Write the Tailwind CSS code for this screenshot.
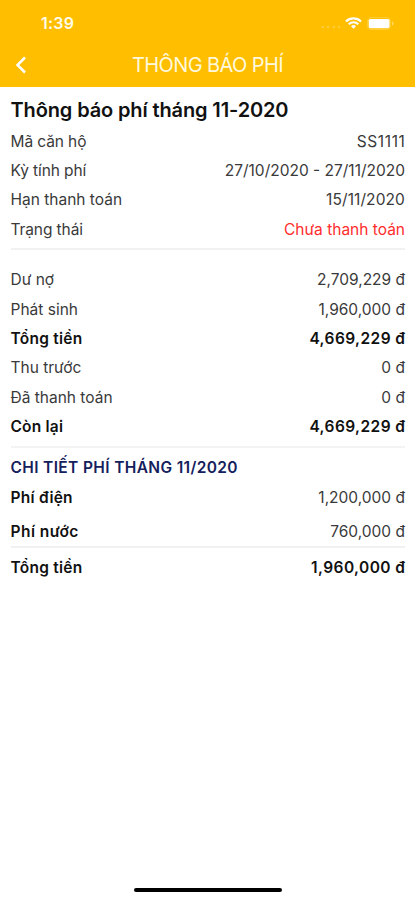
<!DOCTYPE html>
<html lang="vi">
<head>
  <meta charset="UTF-8">
  <meta name="viewport" content="width=device-width, initial-scale=1.0">
  <title>Thông báo phí</title>
  <script src="https://cdn.jsdelivr.net/npm/@tailwindcss/browser@4"></script>
</head>
<body class="bg-white font-['Inter',sans-serif]">
  <div class="flex flex-col h-[900px] w-full overflow-hidden">
    <!-- Header -->
    <header class="bg-[#ffbf00] h-[87px] shrink-0 text-white">
      <div class="flex items-center justify-between h-[46px] pl-[41px] pr-[21px]">
        <span class="text-[16px] tracking-[0.2px] font-semibold text-[#fffbe8]">1:39</span>
        <div class="flex items-center">
          <div class="flex gap-[3.5px] mr-[5px] mt-2">
            <span class="size-[2px] rounded-full bg-white/30"></span>
            <span class="size-[2px] rounded-full bg-white/30"></span>
            <span class="size-[2px] rounded-full bg-white/30"></span>
            <span class="size-[2px] rounded-full bg-white/30"></span>
          </div>
          <svg class="w-[17px] h-[12px]" viewBox="0 0 17 12" fill="none" stroke="#fff" stroke-width="2.1">
            <path d="M1 4.4a10.8 10.8 0 0 1 15 0"/>
            <path d="M3.7 7.2a6.9 6.9 0 0 1 9.6 0"/>
            <path d="M6 9.2a3.7 3.7 0 0 1 5 0L8.5 11.8z" fill="#fff" stroke="none"/>
          </svg>
          <svg class="ml-[5px] w-[27px] h-[13px]" viewBox="0 0 27 13">
            <rect x=".5" y=".5" width="23" height="12" rx="3.5" fill="none" stroke="#fff" stroke-opacity=".2"/>
            <rect x="1.7" y="1.9" width="20.8" height="9.3" rx="1.7" fill="#fff"/>
            <path d="M25 4.5v4c1-.4 1.5-1.2 1.5-2s-.5-1.600-1.500-2z" fill="#fff" fill-opacity=".4"/>
          </svg>
        </div>
      </div>
      <div class="grid grid-cols-[40px_1fr_40px] items-center h-[38px]">
        <svg class="ml-[15px] w-[12px] h-[18px]" viewBox="0 0 12 18" fill="none" stroke="#fff" stroke-width="2.5">
          <path d="M10 1.5 2.5 9l7.5 7.5"/>
        </svg>
        <h1 class="text-center text-[20px] tracking-[-0.6px] font-normal text-[#fff8dc]">THÔNG BÁO PHÍ</h1>
      </div>
    </header>

    <main class="pl-[10.5px] pr-[10px] text-[15.5px] leading-[29.4px] text-[#3a3a3a]">
      <h2 class="pt-[8px] text-[20px] leading-[31.6px] tracking-[-0.13px] font-semibold text-[#111]">Thông báo phí tháng 11-2020</h2>

      <!-- Apartment info -->
      <div class="pb-1 border-b-2 border-[#f1f1f1]">
        <div class="flex justify-between"><span class="tracking-[-0.1px]">Mã căn hộ</span><span class="tracking-[0.6px] -mr-[0.5px]">SS1111</span></div>
        <div class="flex justify-between"><span class="tracking-[-0.1px]">Kỳ tính phí</span><span>27/10/2020 - 27/11/2020</span></div>
        <div class="flex justify-between"><span>Hạn thanh toán</span><span class="tracking-[0.1px]">15/11/2020</span></div>
        <div class="flex justify-between"><span class="tracking-[-0.1px]">Trạng thái</span><span class="text-[#ff2d2d]">Chưa thanh toán</span></div>
      </div>

      <!-- Totals -->
      <div class="pt-[15px] pb-[4.5px] border-b-2 border-[#f3f3f3]">
        <div class="flex justify-between"><span>Dư nợ</span><span>2,709,229 đ</span></div>
        <div class="flex justify-between"><span>Phát sinh</span><span>1,960,000 đ</span></div>
        <div class="flex justify-between font-semibold text-[#111]"><span class="tracking-[0.25px]">Tổng tiền</span><span class="tracking-[0.42px] -mr-[0.4px]">4,669,229 đ</span></div>
        <div class="flex justify-between"><span>Thu trước</span><span>0 đ</span></div>
        <div class="flex justify-between"><span>Đã thanh toán</span><span>0 đ</span></div>
        <div class="flex justify-between font-semibold text-[#111]"><span class="tracking-[0.2px]">Còn lại</span><span class="tracking-[0.42px] -mr-[0.4px]">4,669,229 đ</span></div>
      </div>

      <!-- Fee details -->
      <div class="pt-[5px]">
        <h3 class="font-semibold tracking-[0.36px] text-[#14205c]">CHI TIẾT PHÍ THÁNG 11/2020</h3>
        <div class="flex justify-between"><span class="font-semibold tracking-[0.25px] text-[#111]">Phí điện</span><span>1,200,000 đ</span></div>
        <div class="flex justify-between pt-[5px] border-b-2 border-[#f1f1f1]"><span class="font-semibold tracking-[0.45px] text-[#111]">Phí nước</span><span>760,000 đ</span></div>
        <div class="flex justify-between pt-[4.500px] font-semibold text-[#111]"><span class="tracking-[0.25px]">Tổng tiền</span><span class="tracking-[0.42px] -mr-[0.4px]">1,960,000 đ</span></div>
      </div>
    </main>

    <!-- Home indicator -->
    <div class="mt-auto mb-[8px] mx-auto h-[4px] w-[148px] shrink-0 rounded-full bg-black"></div>
  </div>
</body>
</html>
